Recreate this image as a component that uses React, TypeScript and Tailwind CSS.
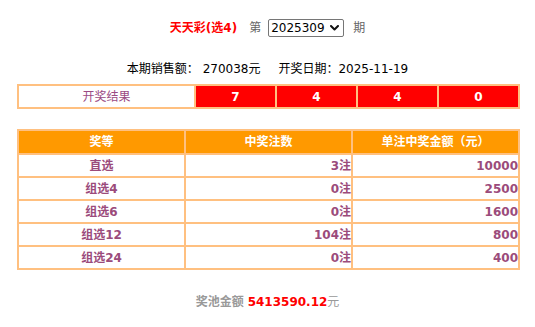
import { useState } from "react";

const font = { fontFamily: '"DejaVu Sans", "Noto Sans CJK SC", sans-serif' };

const prizes = [
  { name: "直选", count: "3注", amount: "10000" },
  { name: "组选4", count: "0注", amount: "2500" },
  { name: "组选6", count: "0注", amount: "1600" },
  { name: "组选12", count: "104注", amount: "800" },
  { name: "组选24", count: "0注", amount: "400" },
];

const balls = ["7", "4", "4", "0"];

const IssuePicker = () => {
  const [issue, setIssue] = useState("2025309");
  return (
    <div className="relative">
      <select
        value={issue}
        onChange={(e) => setIssue(e.target.value)}
        className="block h-[18px] w-[76px] appearance-none rounded-[2px] border border-[#767676] bg-white pl-[2px] pr-[16px] text-[12px] leading-[16px] text-black"
      >
        <option value="2025309">2025309</option>
        <option value="2025308">2025308</option>
        <option value="2025307">2025307</option>
      </select>
      <svg
        width="9" height="6" viewBox="0 0 9 6" fill="none"
        stroke="#111" strokeWidth="2" strokeLinecap="round" strokeLinejoin="round"
        className="pointer-events-none absolute right-[5px] top-[6px]"
      >
        <path d="M1 1l3.5 3.5L8 1" />
      </svg>
    </div>
  );
};

export default function App() {
  return (
    <div className="h-[327px] w-[535px] bg-white text-[12px]" style={font}>
      {/* Title + issue picker */}
      <div className="flex items-center justify-center pt-[19px]">
        <span className="font-bold text-[#ff0000]">天天彩(选4)</span>
        <span className="ml-[12px] mr-[7px] text-[#666]">第</span>
        <IssuePicker />
        <span className="ml-[9px] text-[#666]">期</span>
      </div>

      {/* Sales + date */}
      <div className="mt-[23px] flex justify-center leading-[18px] text-black">
        <span>本期销售额： 270038元</span>
        <span className="ml-[18px]">开奖日期：2025-11-19</span>
      </div>

      <div className="pl-[17px] pr-[15px]">
        {/* Draw result */}
        <div className="mt-[6px] grid grid-cols-[175px_1fr_1fr_1fr_1fr] gap-[2px] bg-[#ffc080] p-[2px]">
          <div className="flex h-[21px] items-center justify-center bg-white text-[#9b4b84]">
            开奖结果
          </div>
          {balls.map((b, i) => (
            <div
              key={i}
              className="flex h-[21px] items-center justify-center bg-[#ff0000] font-bold text-white"
            >
              {b}
            </div>
          ))}
        </div>

        {/* Prize table */}
        <div className="mt-[20px] grid grid-cols-3 gap-[2px] bg-[#ffc080] p-[2px]">
          {["奖等", "中奖注数", "单注中奖金额（元）"].map((h) => (
            <div
              key={h}
              className="flex h-[22px] items-center justify-center bg-[#ff9900] font-bold text-white"
            >
              {h}
            </div>
          ))}
          {prizes.map((p) => (
            <div key={p.name} className="contents font-bold text-[#9b4b7b]">
              <div className="flex h-[21px] items-center justify-center bg-white">{p.name}</div>
              <div className="flex h-[21px] items-center justify-end bg-white">{p.count}</div>
              <div className="flex h-[21px] items-center justify-end bg-white">{p.amount}</div>
            </div>
          ))}
        </div>
      </div>

      {/* Pool */}
      <div className="mt-[23px] flex justify-center leading-[18px] font-bold text-[#999]">
        <span>奖池金额</span>
        <span className="ml-[4px] text-[#ff0000]">5413590.12</span>
        <span className="font-normal">元</span>
      </div>
    </div>
  );
}
